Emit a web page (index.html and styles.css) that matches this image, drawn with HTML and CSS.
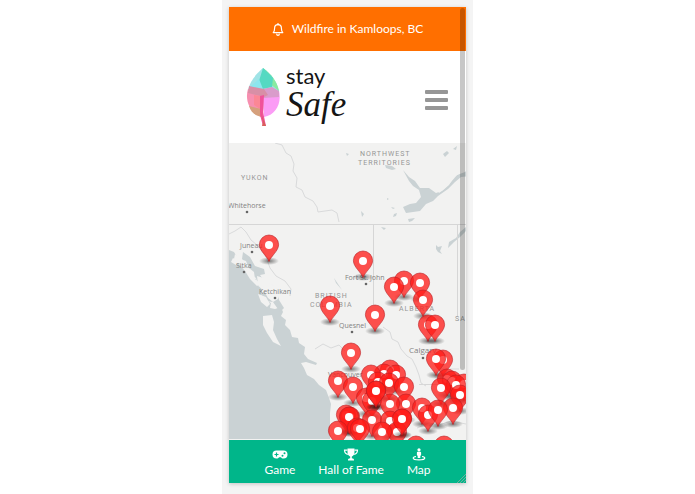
FILE: index.html
```html
<!DOCTYPE html>
<html lang="en">
<head>
    <meta charset="UTF-8">
    <meta name="viewport" content="width=device-width, initial-scale=1.0">
    <title>Stay Safe</title>
    <link rel="stylesheet" href="styles.css">
</head>
<body>
    <main class="stage">
        <div class="phone">
            <a class="alert" href="#alert">
                <svg class="bell" viewBox="0 0 12 13" aria-hidden="true">
                    <path d="M1.2 9.6C2.4 8.4 2.6 7.5 2.6 5.2 2.6 3 4 1.7 6 1.7S9.4 3 9.4 5.2C9.4 7.5 9.6 8.4 10.8 9.6Z"/>
                    <path d="M6 .4v1.3M4.7 11a1.3 1.3 0 0 0 2.6 0"/>
                </svg>
                <span>Wildfire in Kamloops, BC</span>
            </a>

            <header class="header">
                <a class="logo" href="#home">
                    <svg class="leaf" viewBox="0 0 34 58" aria-hidden="true">
                        <path fill="#9fe3e6" d="M17 0C10 6 4 13 2 22l13 6 18-5C31 13 25 6 17 0Z"/>
                        <path fill="#8aeaa0" d="M17 0l6 15 10 8C31 13 25 6 17 0Z"/>
                        <path fill="#55d9c2" d="M17 0l-4 13 3 8 10-2 1-9C24 6 20 3 17 0Z"/>
                        <path fill="#8ce6ee" d="M13 11L4 19l10 3 3-1Z"/>
                        <path fill="#f78fb0" d="M2 21l15 4 1 9-1 15C6 47-2 34 2 21Z"/>
                        <path fill="#fb9cf5" d="M17 27l16-4c3 13-4 24-15 26Z"/>
                        <path fill="#d99ccb" d="M17 21l9-2 7 4v6l-16 1Z"/>
                        <path fill="#d88fa6" d="M3 18l15 3 4 6-4 2-16-4Z"/>
                        <path fill="#fb8795" d="M8 27l7 1-1 13-6-4Z"/>
                        <path fill="#d5a07c" d="M3 38l12 3 1 8C10 48 5 45 3 38Z"/>
                        <path fill="#f0529a" d="M14 28l4-1-1 17 3 14h-3L14 47Z"/>
                        <path fill="#d8605a" d="M14 40l2 8 4 10h-4l1-4Z"/>
                    </svg>
                    <span class="logo-text">
                        <span class="logo-stay">stay</span>
                        <span class="logo-safe">Safe</span>
                    </span>
                </a>
                <button class="menu" type="button" aria-label="Menu">
                    <span></span>
                    <span></span>
                    <span></span>
                </button>
            </header>

            <section class="map" aria-label="Incident map">
                <svg class="map-canvas" viewBox="0 0 237 297" preserveAspectRatio="xMinYMin slice">
                    <defs>
                        <radialGradient id="shade">
                            <stop offset="0" stop-color="#000" stop-opacity=".5"/>
                            <stop offset="1" stop-color="#000" stop-opacity="0"/>
                        </radialGradient>
                        <g id="pin">
                            <ellipse cx="0" cy="16" rx="10" ry="4" fill="url(#shade)"/>
                            <path fill="#ff1c18" fill-opacity=".76" stroke="#b81f24" stroke-opacity=".75" stroke-width=".8" d="M0 16.5C-2 11-9.600 6-9.600-.4a9.600 9.600 0 0 1 19.200 0C9.600 6 2 11 0 16.500Z"/>
                            <circle r="4" fill="#fff"/>
                        </g>
                    </defs>

                    <!-- ocean and coast -->
                    <path class="water" d="M0 107l5 2 3 5-3 4 6 1 4 6 5 3 2 7 5 1 1 6 5 4-1 7 4 4 6 3-1 5 5 1 6-2 2 5-2 4 5 4-1 5 5 5 2 7 6 1 1 5 6 4-1 7 4 5 9 4-1 2-10-3-5 1 3 5 3 7 7 4 5 6 7 5 3 8 2 6-1 9v26H0Z"/>
                    <path class="water" d="M14 109l7 5 5 9 9 3 1 5-5 1 4 6 9 5 5 7 1 7 5 8-4 4-7-10-8-1-5-8 6-1-8-7-2-7-8-6-1-7-5-6Z"/>
                    <path class="land" d="M6 111l5 5 6 2 3 7 5 4 1 7 5 4-3 3-7-7-5-8-6-7-5-5Z"/>
                    <path class="land" d="M28 133l7 2 5 5 7 4 4 6-2 6-5 3-5-4-4-7-6-6Z"/>
                    <path class="land" d="M34 173l9-1 2 7-1 8 4 9 4 7-8-4-6-9-4-8Z"/>
                    <path class="land" d="M4 115l6 4-3 3-5-3ZM29 151l8 3 4 7-3 3-6-5Z"/>

                    <!-- lakes -->
                    <path class="water" d="M174 27l6 7 6 4 5 7 9 0 7 5 6-2 7-6 5-8 8-5 7-1v5l-8 1-6 5-7 7-10 7-5 5-7 3-6 7-14 2-3-6 7-3 6-1 5-6-2-7-6-4-4-5Z"/>
                    <path class="land" d="M209 48l7-7 5-7 7-5 8-2v2l-8 3-6 7-7 7-5 4Z"/>
                    <path class="water" d="M156 22l7 1 4 3-4 1-6-2ZM214 11l4-3 2 2-4 4ZM224 6l4-3-1 4ZM165 71l3-1-1 3-3 1ZM179 76l7-1-3 3-3 1ZM132 68l3 3-2 3ZM162 64l4 1-2 1ZM158 55l2 1-2 1ZM152 84l5 1-2 2ZM207 102l2 2 4-1-2 5 2 3-4-2-2-3Z"/>
                    <path class="water" d="M237 88l-6 6-6 5-6 6 1-6 7-4 4-6 6-5ZM105 135l8 12-6-7ZM117 10l3 1-2 2Z"/>

                    <!-- borders, roads and rivers -->
                    <path class="border" d="M0 81.500h237M144.500 82v80M228.500 82v92M190 241.500h47"/>
                    <path class="river" d="M46 0l7 2 4 8 5 3 3 8-1 7 4 7-1 9 6 3 3 7 8 4 4 6 1 5 7-1 7-1 5 3 2 9M0 91l6-3 6-4 5 5 5 8 6 5 8 9 5 14 6 8 9 5 6 8-1 7M154 184l7 5 2 7 6 3 3 7 6 7 5 3 4 8 3 8 2 8 5 3M212 226l18 0M86 206l8-5 8 4 8-3 6 6M188 285l12-5 10 2 12-4 15 3"/>

                    <!-- place names -->
                    <g class="region">
                        <text x="12" y="37">YUKON</text>
                        <text x="131" y="13">NORTHWEST</text>
                        <text x="129" y="22">TERRITORIES</text>
                        <text x="86" y="155">BRITISH</text>
                        <text x="81" y="164">COLUMBIA</text>
                        <text x="170" y="168">ALBERTA</text>
                        <text x="226" y="178">SA</text>
                    </g>
                    <g class="town">
                        <text x="-1" y="65">Whitehorse</text>
                        <text x="11" y="105">Juneau</text>
                        <text x="7" y="125">Sitka</text>
                        <text x="30" y="151">Ketchikan</text>
                        <text x="116" y="137">Fort St. John</text>
                        <text x="110" y="185">Quesnel</text>
                        <text x="99" y="234">Vancouver</text>
                        <text class="city" x="180" y="210">Calgary</text>
                    </g>
                    <g class="dot">
                        <circle cx="18" cy="69" r="1.300"/>
                        <circle cx="23" cy="109" r="1.300"/>
                        <circle cx="15" cy="129" r="1.300"/>
                        <circle cx="46" cy="155" r="1.300"/>
                        <circle cx="137" cy="141" r="1.300"/>
                        <circle cx="123" cy="189" r="1.300"/>
                        <circle cx="194" cy="215" r="1.300"/>
                    </g>

                    <!-- incidents, north to south -->
                    <use href="#pin" x="40" y="102"/>
                    <use href="#pin" x="134" y="118"/>
                    <use href="#pin" x="175" y="138"/>
                    <use href="#pin" x="191" y="140"/>
                    <use href="#pin" x="165" y="144"/>
                    <use href="#pin" x="194" y="157"/>
                    <use href="#pin" x="101" y="163"/>
                    <use href="#pin" x="146" y="172"/>
                    <use href="#pin" x="199" y="182"/>
                    <use href="#pin" x="206" y="182"/>
                    <use href="#pin" x="122" y="210"/>
                    <use href="#pin" x="214" y="217"/>
                    <use href="#pin" x="207" y="216"/>
                    <use href="#pin" x="161" y="227"/>
                    <use href="#pin" x="155" y="231"/>
                    <use href="#pin" x="142" y="232"/>
                    <use href="#pin" x="167" y="232"/>
                    <use href="#pin" x="218" y="236"/>
                    <use href="#pin" x="223" y="238"/>
                    <use href="#pin" x="235" y="241"/>
                    <use href="#pin" x="109" y="238"/>
                    <use href="#pin" x="149" y="239"/>
                    <use href="#pin" x="160" y="240"/>
                    <use href="#pin" x="227" y="242"/>
                    <use href="#pin" x="124" y="244"/>
                    <use href="#pin" x="175" y="244"/>
                    <use href="#pin" x="212" y="245"/>
                    <use href="#pin" x="137" y="255"/>
                    <use href="#pin" x="143" y="258"/>
                    <use href="#pin" x="147" y="248"/>
                    <use href="#pin" x="231" y="252"/>
                    <use href="#pin" x="147" y="248"/>
                    <use href="#pin" x="177" y="261"/>
                    <use href="#pin" x="161" y="261"/>
                    <use href="#pin" x="193" y="265"/>
                    <use href="#pin" x="224" y="265"/>
                    <use href="#pin" x="199" y="272"/>
                    <use href="#pin" x="209" y="267"/>
                    <use href="#pin" x="117" y="272"/>
                    <use href="#pin" x="121" y="274"/>
                    <use href="#pin" x="143" y="277"/>
                    <use href="#pin" x="173" y="276"/>
                    <use href="#pin" x="161" y="278"/>
                    <use href="#pin" x="120" y="274"/>
                    <use href="#pin" x="168" y="289"/>
                    <use href="#pin" x="173" y="276"/>
                    <use href="#pin" x="128" y="285"/>
                    <use href="#pin" x="131" y="286"/>
                    <use href="#pin" x="109" y="288"/>
                    <use href="#pin" x="153" y="289"/>
                    <use href="#pin" x="187" y="303"/>
                    <use href="#pin" x="215" y="303"/>
                </svg>
            </section>

            <nav class="tabs">
                <a class="tab" href="#game">
                    <svg class="tab-icon" viewBox="0 0 16 13" aria-hidden="true">
                        <path fill="#fff" d="M4.500 2.500h7a4 4 0 0 1 0 8c-1.300 0-2-.6-2.600-1.300H7.100C6.500 9.900 5.800 10.500 4.500 10.500a4 4 0 0 1 0-8Z"/>
                        <path stroke="#00b68a" stroke-width="1.200" d="M2.500 6.500h4M4.500 4.500v4"/>
                        <circle cx="10.500" cy="7.700" r="1" fill="#00b68a"/>
                        <circle cx="12.500" cy="5.300" r="1" fill="#00b68a"/>
                    </svg>
                    <span>Game</span>
                </a>
                <a class="tab" href="#fame">
                    <svg class="tab-icon" viewBox="0 0 16 13" aria-hidden="true">
                        <path fill="#fff" d="M4.500.5h7V4c0 2.500-1.300 4-2.700 4.500v1.800c1.500 0 2.200.7 2.200 1.700v.5H5V12c0-1 .7-1.700 2.200-1.700V8.500C5.800 8 4.500 6.500 4.500 4Z"/>
                        <path fill="none" stroke="#fff" stroke-width="1.200" d="M4.500 2.100h-3c0 2.500 1.500 4.100 4 4.400M11.500 2.100h3c0 2.500-1.500 4.100-4 4.400"/>
                    </svg>
                    <span>Hall of Fame</span>
                </a>
                <a class="tab" href="#map">
                    <svg class="tab-icon" viewBox="0 0 16 13" aria-hidden="true">
                        <circle cx="8" cy="1.800" r="1.600" fill="#fff"/>
                        <path fill="#fff" d="M6.700 3.700h2.600q.8 0 .8.800v2.700l-.8.500v2.400H6.700V7.700l-.8-.5V4.500q0-.8.800-.8Z"/>
                        <path fill="none" stroke="#fff" stroke-width="1.200" d="M5 8.500c-1.800.3-2.800.8-2.800 1.500 0 1.100 2.600 1.900 5.800 1.900s5.800-.8 5.800-1.900c0-.7-1-1.200-2.800-1.500"/>
                    </svg>
                    <span>Map</span>
                </a>
            </nav>

            <div class="scrollbar"></div>
            <svg class="grip" viewBox="0 0 9 9" aria-hidden="true">
                <path d="M0 9L9 0M3 9l6-6M6 9l3-3"/>
            </svg>
        </div>
    </main>
</body>
</html>
```

FILE: styles.css
```css
body {
    margin: 0;
    background: #fff;
    font-family: Lato, "Liberation Sans", sans-serif;
    font-size: 12px;
    line-height: 16px;
}

a {
    color: inherit;
    text-decoration: none;
}

.stage {
    box-sizing: border-box;
    display: flex;
    width: 100%;
    max-width: 251px;
    height: 100vh;
    margin: 0 auto;
    padding: 7px 7px 11px;
    background: #f4f4f4;
}

.phone {
    position: relative;
    display: flex;
    flex: 1;
    flex-direction: column;
    min-width: 0;
    background: #fff;
    box-shadow: 0 1px 4px rgba(0, 0, 0, 0.2);
}

.alert {
    display: flex;
    align-items: center;
    justify-content: center;
    gap: 8px;
    padding: 14px 0;
    background: #ff6f00;
    color: #fff;
}

.bell {
    width: 12px;
    height: 13px;
    fill: none;
    stroke: #fff;
    stroke-width: 1.2;
    stroke-linejoin: round;
    stroke-linecap: round;
}

.header {
    display: flex;
    align-items: center;
    justify-content: space-between;
    padding: 17px 18px 17px 17px;
}

.logo {
    display: flex;
    gap: 6px;
    color: #151515;
}

.leaf {
    width: 34px;
    height: 58px;
}

.logo-text {
    display: flex;
    flex-direction: column;
}

.logo-stay {
    font-size: 22px;
    font-weight: 400;
    line-height: 16px;
}

.logo-safe {
    font-family: "Liberation Serif", serif;
    font-size: 35px;
    font-style: italic;
    line-height: 42px;
}

.menu {
    display: flex;
    flex-direction: column;
    gap: 4px;
    padding: 6px 0 0;
    border: 0;
    background: none;
    cursor: pointer;
}

.menu span {
    width: 23px;
    height: 4px;
    border-radius: 1px;
    background: #969696;
}

.map {
    flex: 1;
    min-height: 0;
    overflow: hidden;
    background: #f2f2f1;
}

.map-canvas {
    display: block;
    width: 100%;
    height: 100%;
    font-family: "Open Sans", "Liberation Sans", sans-serif;
    font-size: 7px;
}

.water {
    fill: #cad2d4;
}

.land {
    fill: #f2f2f1;
}

.border {
    fill: none;
    stroke: #d6d6d6;
}

.river {
    fill: none;
    stroke: #d9dadb;
}

.region {
    fill: #969696;
    font-family: Roboto, "Liberation Sans", sans-serif;
    letter-spacing: 1px;
}

.town {
    fill: #828282;
}

.city {
    font-size: 8px;
}

.dot {
    fill: #666;
}

.tabs {
    display: flex;
    justify-content: center;
    gap: 23px;
    padding: 8px 0 5px;
    background: #00b68a;
    color: #fff;
}

.tab {
    display: flex;
    flex-direction: column;
    align-items: center;
    gap: 1px;
}

.tab-icon {
    width: 16px;
    height: 13px;
}

.scrollbar {
    position: absolute;
    top: 1px;
    right: 1px;
    width: 5px;
    height: 76%;
    border-radius: 3px;
    background: rgba(0, 0, 0, 0.22);
}

.grip {
    position: absolute;
    right: 0;
    bottom: 0;
    width: 9px;
    height: 9px;
    fill: none;
    stroke: #6fae9c;
}
```
